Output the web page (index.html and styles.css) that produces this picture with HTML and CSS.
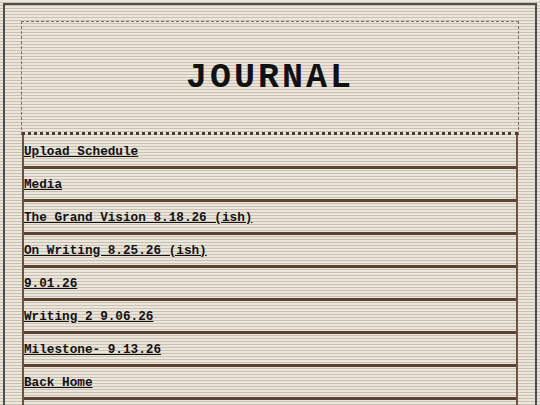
FILE: index.html
```html
<!DOCTYPE html>
<html>
<head>
<meta charset="utf-8">
<title>Journal</title>
<link rel="stylesheet" href="styles.css">
</head>
<body>
<div class="page">
  <header class="masthead">
    <h1 class="title">JOURNAL</h1>
  </header>
  <nav class="entries">
    <a class="entry" href="#">Upload Schedule</a>
    <a class="entry" href="#">Media</a>
    <a class="entry" href="#">The Grand Vision 8.18.26 (ish)</a>
    <a class="entry" href="#">On Writing 8.25.26 (ish)</a>
    <a class="entry" href="#">9.01.26</a>
    <a class="entry" href="#">Writing 2 9.06.26</a>
    <a class="entry" href="#">Milestone- 9.13.26</a>
    <a class="entry" href="#">Back Home</a>
    <a class="entry" href="#">&nbsp;</a>
  </nav>
</div>
</body>
</html>
```
FILE: styles.css
```css
html, body {
  margin: 0;
  padding: 0;
}
body {
  background: repeating-linear-gradient(to bottom, #ebe6dc 0, #ebe6dc 2px, #c9c0b1 2px, #c9c0b1 3px);
  font-family: "Courier New", Courier, "Nimbus Mono PS", "Liberation Mono", monospace;
  color: #111;
}
.page {
  margin: 3px 3px 0 3px;
  border: 2px solid #4d4d4d;
  border-bottom: none;
  padding: 16px 16px 0 16px;
  min-height: 420px;
}
.masthead {
  height: 110px;
  border: 1px dashed #7a6a5c;
  border-bottom: 3px dotted #4e3a2c;
  display: flex;
  align-items: center;
  justify-content: center;
}
.title {
  margin: 2px 0 0 0;
  font-size: 35px;
  font-weight: bold;
  letter-spacing: 3px;
  color: #111;
}
.entries {
  display: flex;
  flex-direction: column;
  margin: 0 1px;
  padding-top: 1px;
  border-left: 2px solid #6b5242;
  border-right: 2px solid #6b5242;
}
.entry {
  display: flex;
  align-items: center;
  height: 30px;
  border-bottom: 3px solid #5b4334;
  padding-left: 0;
  font-size: 12.7px;
  font-weight: bold;
  color: #111;
  text-decoration: underline;
}
```
